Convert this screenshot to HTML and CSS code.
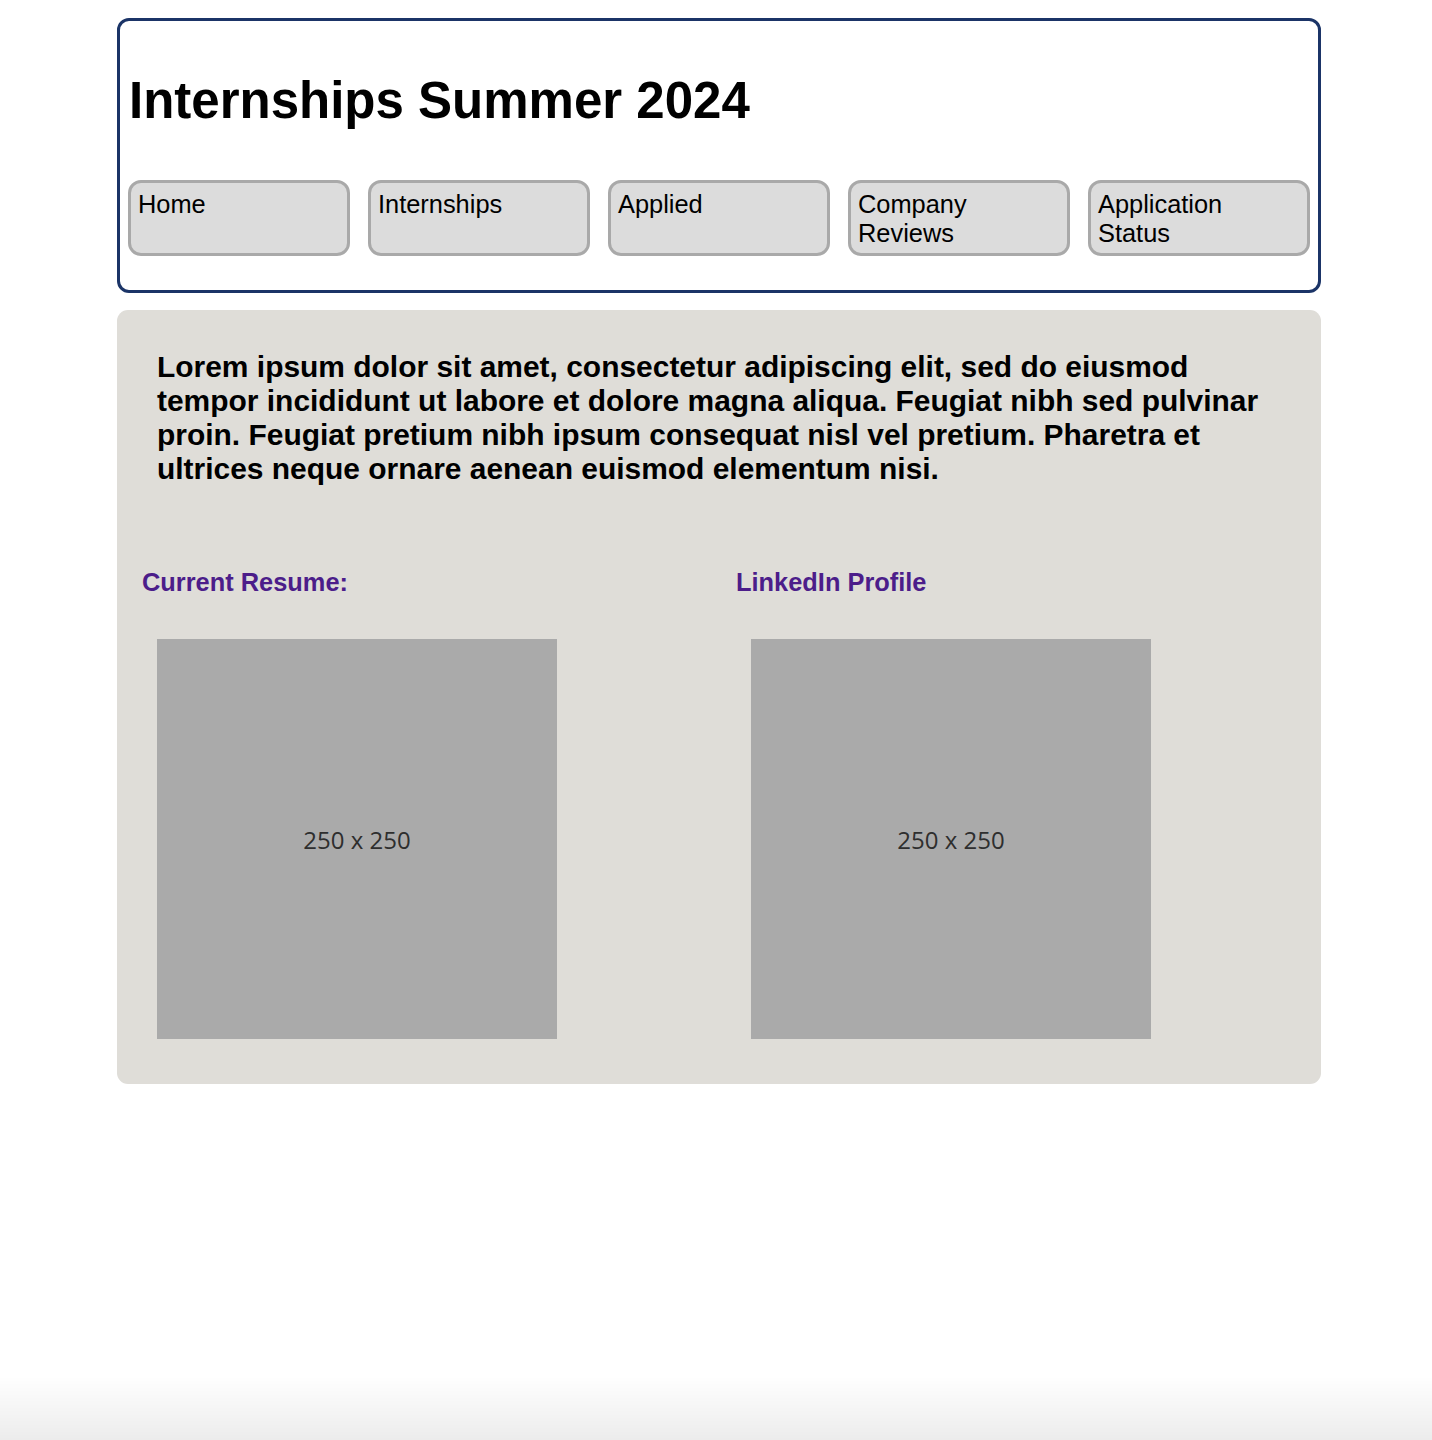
FILE: index.html
```html
<!DOCTYPE html>
<html lang="en">
<head>
<meta charset="utf-8">
<title>Internships Summer 2024</title>
<link rel="stylesheet" href="styles.css">
</head>
<body>
<div class="page">
  <header class="site-header">
    <h1 class="title">Internships Summer 2024</h1>
    <nav class="nav">
      <a class="nav-btn" href="#">Home</a>
      <a class="nav-btn" href="#">Internships</a>
      <a class="nav-btn" href="#">Applied</a>
      <a class="nav-btn" href="#">Company Reviews</a>
      <a class="nav-btn" href="#">Application Status</a>
    </nav>
  </header>
  <main class="content">
    <p class="intro">Lorem ipsum dolor sit amet, consectetur adipiscing elit, sed do eiusmod tempor incididunt ut labore et dolore magna aliqua. Feugiat nibh sed pulvinar proin. Feugiat pretium nibh ipsum consequat nisl vel pretium. Pharetra et ultrices neque ornare aenean euismod elementum nisi.</p>
    <div class="columns">
      <section class="col">
        <h2 class="label">Current Resume:</h2>
        <div class="placeholder"><span>250 x 250</span></div>
      </section>
      <section class="col">
        <h2 class="label">LinkedIn Profile</h2>
        <div class="placeholder"><span>250 x 250</span></div>
      </section>
    </div>
  </main>
</div>
</body>
</html>
```
FILE: styles.css
```css
html, body {
  margin: 0;
  padding: 0;
  background: #ffffff;
}
body {
  font-family: "Liberation Sans", Arial, sans-serif;
  color: #000;
  min-height: 1440px;
}
body::after {
  content: "";
  position: fixed;
  left: 0;
  right: 0;
  bottom: 0;
  height: 64px;
  background: linear-gradient(to bottom, rgba(0,0,0,0), rgba(0,0,0,0.075));
  pointer-events: none;
}
.page {
  width: 1204px;
  margin: 18px 0 0 117px;
}
.site-header {
  border: 3px solid #1b3467;
  border-radius: 12px;
  padding: 0 8px 34px;
}
.title {
  font-size: 51px;
  font-weight: bold;
  margin: 50px 0 50px 1px;
  line-height: normal;
}
.nav {
  display: flex;
  gap: 18px;
}
.nav-btn {
  flex: 1;
  height: 76px;
  box-sizing: border-box;
  border: 3px solid #a9a9a9;
  border-radius: 13px;
  background: #dcdcdc;
  color: #000;
  text-decoration: none;
  font-size: 25.4px;
  padding: 7px 7px 0;
  line-height: 29px;
}
.content {
  margin-top: 17px;
  background: #dfddd8;
  border-radius: 11px;
  padding: 40px 40px 45px 25px;
}
.intro {
  margin: 0 0 0 15px;
  font-size: 29.95px;
  font-weight: bold;
  line-height: 34px;
}
.columns {
  display: grid;
  grid-template-columns: 594px 1fr;
  margin-top: 82px;
}
.label {
  margin: 0;
  font-size: 25.4px;
  font-weight: bold;
  color: #4c1d8a;
  line-height: 29px;
}
.placeholder {
  width: 400px;
  height: 400px;
  margin: 42px 0 0 15px;
  background: #aaaaaa;
  display: flex;
  align-items: center;
  justify-content: center;
}
.placeholder span {
  font-family: "Open Sans", "DejaVu Sans", sans-serif;
  font-size: 24px;
  color: #2e2e2e;
}
```
